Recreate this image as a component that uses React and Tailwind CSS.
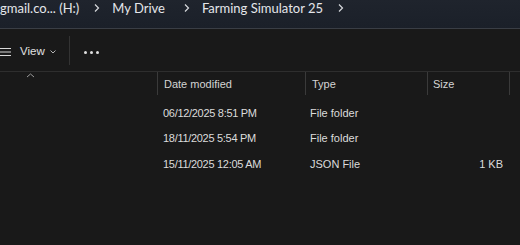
import React from "react";

const crumbFont = { fontFamily: 'Lato, "Open Sans", sans-serif' };
const tableFont = { fontFamily: '"Liberation Sans", Arial, sans-serif' };

const Chevron = () => (
  <svg width="8" height="10" viewBox="0 0 8 10" className="shrink-0">
    <path d="M2 1.5 L5.5 5 L2 8.5" fill="none" stroke="#d6d8dc" strokeWidth="1.2" />
  </svg>
);

const rows = [
  { date: "06/12/2025 8:51 PM", type: "File folder", size: "" },
  { date: "18/11/2025 5:54 PM", type: "File folder", size: "" },
  { date: "15/11/2025 12:05 AM", type: "JSON File", size: "1 KB" },
];

export default function App() {
  return (
    <div className="w-[520px] h-[245px] overflow-hidden bg-[#191919] text-[#e6e6e6]" style={tableFont}>
      <div
        className="h-[29px] bg-gradient-to-b from-[#1f242d] to-[#1b2029] flex items-start text-[13px] text-[#e4e6ea] border-b border-[#3a3e45]"
        style={crumbFont}
      >
        <span className="leading-[16px]">gmail.co... (H:)</span>
        <span className="ml-[14px] mt-[3px]"><Chevron /></span>
        <span className="ml-[11px] leading-[16px]">My Drive</span>
        <span className="ml-[18px] mt-[3px]"><Chevron /></span>
        <span className="ml-[11px] leading-[16px]">Farming Simulator 25</span>
        <span className="ml-[14px] mt-[3px]"><Chevron /></span>
      </div>

      <div className="h-[43px] pt-[4px] flex items-center border-b border-[#2e2e2e]">
        <svg width="13" height="10" viewBox="0 0 13 10" className="ml-[-1px]">
          <path d="M0 1.5H12M0 5H12M0 8.5H12" stroke="#d8d8d8" strokeWidth="1.1" />
        </svg>
        <span className="ml-[8px] text-[11.5px] text-[#e0e0e0]">View</span>
        <svg width="8" height="6" viewBox="0 0 8 6" className="ml-[4px]">
          <path d="M1.5 1.5 L4 4 L6.5 1.5" fill="none" stroke="#b5b5b5" strokeWidth="1" />
        </svg>
        <div className="ml-[12px] w-px h-[29px] mt-[-3px] bg-[#333333]" />
        <div className="ml-[14px] flex gap-[3px]">
          <span className="w-[3px] h-[3px] rounded-full bg-[#e0e0e0]" />
          <span className="w-[3px] h-[3px] rounded-full bg-[#e0e0e0]" />
          <span className="w-[3px] h-[3px] rounded-full bg-[#e0e0e0]" />
        </div>
      </div>

      <div className="relative h-[23px] flex text-[11px] text-[#d4d4d4]">
        <svg width="9" height="5" viewBox="0 0 9 5" className="absolute left-[26px] top-[1px]">
          <path d="M1 4 L4.5 1 L8 4" fill="none" stroke="#9a9a9a" strokeWidth="1" />
        </svg>
        <div className="w-[157px]" />
        <div className="w-[148px] border-l border-[#3a3a3a] pl-[6px] pt-[2px] flex items-center">Date modified</div>
        <div className="w-[122px] border-l border-[#3a3a3a] pl-[6px] pt-[2px] flex items-center">Type</div>
        <div className="w-[82px] border-l border-[#3a3a3a] pl-[5px] pt-[2px] flex items-center">Size</div>
        <div className="border-l border-[#3a3a3a]" />
      </div>

      <div className="pt-[5px] text-[11px] text-[#dcdcdc]">
        {rows.map((r) => (
          <div key={r.date} className="h-[25.5px] flex items-center">
            <div className="w-[163px]" />
            <div className="w-[147px] tracking-[-0.3px]">{r.date}</div>
            <div className="w-[122px]">{r.type}</div>
            <div className="w-[71px] text-right">{r.size}</div>
          </div>
        ))}
      </div>
    </div>
  );
}
